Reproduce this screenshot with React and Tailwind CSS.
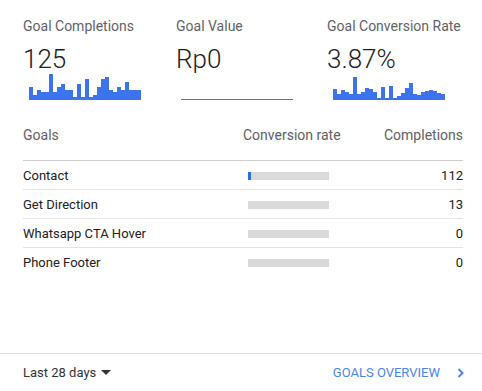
import React from "react";

const spark1 = [13,5,10,8,8,26,8,13,16,10,10,3,16,3,21,3,5,13,21,23,10,8,13,10,18,10,10,10];
const spark2 = [11,6,10,8,6,23,6,8,12,11,8,2,13,2,14,2,4,7,12,17,6,5,8,9,10,9,7,6];

function Spark({ data }) {
  return (
    <div className="ml-[6px] flex h-[26px] w-[112px] items-end">
      {data.map((h, i) => (
        <div key={i} className="w-[4px] bg-[#3b74ec]" style={{ height: h }} />
      ))}
    </div>
  );
}

function Metric({ title, value, children, className }) {
  return (
    <div className={className}>
      <div className="h-[18px] text-[14px] leading-[18px] text-[#5f6368]">{title}</div>
      <div className="mt-[9px] h-[30px] text-[26px] font-light leading-[30px] text-[#212121]">{value}</div>
      {children}
    </div>
  );
}

const rows = [
  { name: "Contact", pct: 3, val: "112" },
  { name: "Get Direction", pct: 0, val: "13" },
  { name: "Whatsapp CTA Hover", pct: 0, val: "0" },
  { name: "Phone Footer", pct: 0, val: "0" },
];

export default function App() {
  return (
    <div
      className="flex h-[391px] w-[482px] flex-col bg-white"
      style={{ fontFamily: "Roboto, 'Liberation Sans', sans-serif" }}
    >
      <div className="flex-1 pl-[23px] pr-[19px] pt-[17px]">
        <div className="flex">
          <Metric title="Goal Completions" value="125" className="w-[153px]">
            <Spark data={spark1} />
          </Metric>
          <Metric title="Goal Value" value="Rp0" className="w-[151px]">
            <div className="ml-[5px] flex h-[26px] w-[112px] items-end">
              <div className="h-[1px] w-full bg-[#3b74ec]" />
            </div>
          </Metric>
          <Metric title="Goal Conversion Rate" value="3.87%" className="flex-1">
            <Spark data={spark2} />
          </Metric>
        </div>

        <div className="grid grid-cols-[220px_1fr_auto] border-b border-[#d0d0d0] pb-[16px] pt-[26px] text-[14px] leading-[18px] text-[#616161]">
          <div>Goals</div>
          <div>Conversion rate</div>
          <div className="text-right">Completions</div>
        </div>
        {rows.map((r, i) => (
          <div
            key={r.name}
            className={
              "grid h-[29px] grid-cols-[220px_1fr_auto] items-center pt-[1px] text-[13px] text-[#212121] " +
              (i < rows.length - 1 ? "border-b border-[#e4e4e4]" : "")
            }
          >
            <div>{r.name}</div>
            <div className="ml-[5px] flex h-[8px] w-[81px] bg-[#dadada]">
              {r.pct > 0 && <div className="h-full bg-[#2f6de0]" style={{ width: r.pct }} />}
            </div>
            <div className="text-right">{r.val}</div>
          </div>
        ))}
      </div>

      <div className="flex h-[38px] items-center justify-between border-t border-[#e0e0e0] pl-[23px] pr-[17px] text-[13px]">
        <div className="flex items-center text-[#333333]">
          <span>Last 28 days</span>
          <svg className="ml-[5px]" width="10" height="5" viewBox="0 0 10 5">
            <path d="M0 0 L10 0 L5 5 Z" fill="#333333" />
          </svg>
        </div>
        <div className="flex items-center text-[#4a86e8]">
          <span>GOALS OVERVIEW</span>
          <svg className="ml-[17px]" width="8" height="10" viewBox="0 0 8 10">
            <path d="M1.5 1 L5.5 5 L1.5 9" fill="none" stroke="#4a86e8" strokeWidth="2" />
          </svg>
        </div>
      </div>
    </div>
  );
}
